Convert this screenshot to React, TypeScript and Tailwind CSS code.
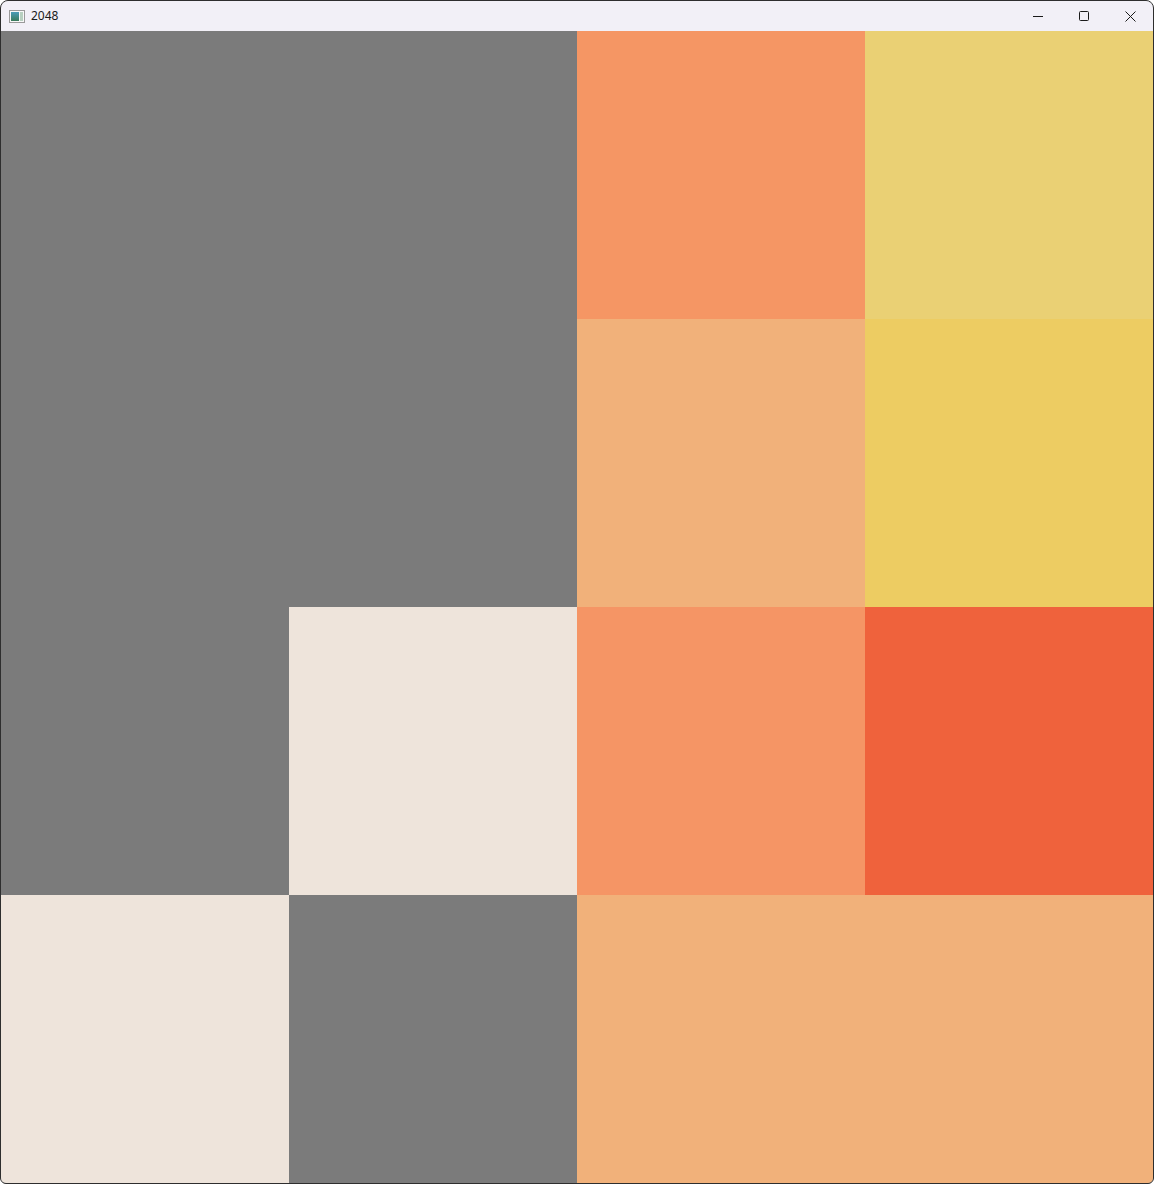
const tiles = [
  "#7b7b7b", "#7b7b7b", "#f59664", "#ead074",
  "#7b7b7b", "#7b7b7b", "#f1b17a", "#edcc62",
  "#7b7b7b", "#eee4db", "#f59565", "#ef623c",
  "#eee4db", "#7b7b7b", "#f1b17a", "#f1b17a",
];

export default function App() {
  return (
    <div className="w-[1154px] h-[1184px] bg-[#7b7b7b] border border-[#2e2e2e] rounded-t-lg rounded-b-md overflow-hidden flex flex-col font-['Noto_Sans',sans-serif]">
      <div className="h-[30px] bg-[#f2f0f7] flex items-center shrink-0">
        <div className="ml-[8px] w-[16px] h-[13px] border border-[#9a9a9a] bg-[#f8f8f8] flex p-[1px] gap-[1px]">
          <div className="w-[8px] h-full bg-gradient-to-b from-[#4b9bb8] to-[#3b7a5a]" />
          <div className="w-[3px] h-full bg-[#b8d0c0]" />
        </div>
        <span className="ml-[6px] text-[12px] text-[#1a1a1a] leading-none">2048</span>
        <div className="ml-auto flex h-full">
          <div className="w-[46px] h-full flex items-center justify-center">
            <svg width="10" height="10" viewBox="0 0 10 10">
              <path d="M0 5.5H10" stroke="#1a1a1a" strokeWidth="1" />
            </svg>
          </div>
          <div className="w-[46px] h-full flex items-center justify-center">
            <svg width="10" height="10" viewBox="0 0 10 10">
              <rect x="0.5" y="0.5" width="9" height="9" rx="1" fill="none" stroke="#1a1a1a" strokeWidth="1" />
            </svg>
          </div>
          <div className="w-[46px] h-full flex items-center justify-center">
            <svg width="11" height="11" viewBox="0 0 11 11">
              <path d="M0.5 0.5L10.5 10.5M10.5 0.5L0.5 10.5" stroke="#1a1a1a" strokeWidth="1" />
            </svg>
          </div>
        </div>
      </div>
      <div className="grid grid-cols-[repeat(4,288px)] grid-rows-[repeat(4,288px)]">
        {tiles.map((c, i) => (
          <div key={i} style={{ backgroundColor: c }} />
        ))}
      </div>
    </div>
  );
}
